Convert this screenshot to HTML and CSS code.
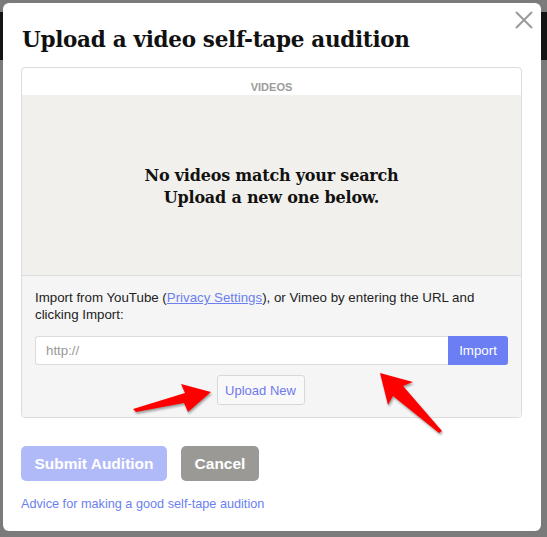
FILE: index.html
```html
<!DOCTYPE html>
<html lang="en">
<head>
    <meta charset="UTF-8">
    <meta name="viewport" content="width=device-width, initial-scale=1.0">
    <title>Upload Audition</title>
    <link rel="stylesheet" href="styles.css">
</head>
<body>
    <div class="backdrop">
        <div class="modal">
            <span class="close">
                <svg width="18" height="18" viewBox="0 0 18 18"><path d="M1 1 L17 17 M17 1 L1 17" stroke="#9a9a9a" stroke-width="2"/></svg>
            </span>
            <h1>Upload a video self-tape audition</h1>

            <div class="panel">
                <div class="panel-head">VIDEOS</div>
                <div class="empty">
                    <p>No videos match your search<br>Upload a new one below.</p>
                </div>
                <div class="import">
                    <p>Import from YouTube (<a href="#">Privacy Settings</a>), or Vimeo by entering the URL and clicking Import:</p>
                    <div class="url-row">
                        <input type="text" placeholder="http://">
                        <button class="import-btn">Import</button>
                    </div>
                    <div class="upload-row">
                        <button class="upload-btn">Upload New</button>
                    </div>
                </div>
            </div>

            <div class="actions">
                <button class="submit">Submit Audition</button>
                <button class="cancel">Cancel</button>
            </div>
            <a class="advice" href="#">Advice for making a good self-tape audition</a>

            <!-- annotation arrows drawn over the dialog -->
            <svg class="arrows" width="547" height="537" viewBox="0 0 547 537">
                <polygon points="133,409 185,393 181,384 211,392 188,412 184,403 136,412" fill="#ff0000"/>
                <polygon points="380,373 413,382 403,386 442,431 439,433 393,396 388,405" fill="#ff0000"/>
            </svg>
        </div>
    </div>
</body>
</html>
```

FILE: styles.css
```css
body{
    margin:0;
    padding:0;
    font-family: "Liberation Sans", Arial, sans-serif;
}
.backdrop{
    width:547px;
    height:537px;
    background: linear-gradient(#7b7b7b 0 12px, #141414 12px 60px, #7b7b7b 60px);
    padding-top:3px;
    box-sizing: border-box;
    overflow: hidden;
}
.modal{
    position: relative;
    width:538px;
    height:528px;
    margin-left:3px;
    background:white;
    border-radius:6px;
    padding:0 19px 0 18px;
    box-sizing: border-box;
}
.close{
    position: absolute;
    top:8px;
    right:8px;
    line-height:0;
}
h1{
    margin:0;
    padding:21px 0 0 1px;
    font-family: "DejaVu Serif", Georgia, serif;
    font-size:21.5px;
    line-height:32px;
    font-weight:bold;
    color:#111;
    letter-spacing:-0.3px;
}
.panel{
    margin-top:11px;
    border:1px solid #dcdcdc;
    border-radius:4px;
    overflow: hidden;
}
.panel-head{
    height:27px;
    padding-top:6px;
    box-sizing:border-box;
    line-height:27px;
    text-align:center;
    font-size:11px;
    font-weight:bold;
    color:#9b9b9b;
}
.empty{
    height:181px;
    padding-top:4px;
    box-sizing:border-box;
    background:#f1f0ec;
    border-bottom:1px solid #dcdcdc;
    display:flex;
    align-items:center;
    justify-content:center;
}
.empty p{
    margin:0;
    text-align:center;
    font-family: "DejaVu Serif", Georgia, serif;
    font-size:16px;
    font-weight:bold;
    line-height:22px;
    color:#111;
    letter-spacing:-0.2px;
}
.import{
    background:#f5f5f5;
    padding:13px 13px 12px 13px;
}
.import p{
    margin:0;
    font-size:13.3px;
    line-height:17px;
    color:#222;
}
.import a{
    color:#6b7ff0;
}
.url-row{
    display:flex;
    margin-top:13px;
}
.url-row input{
    flex:1;
    height:29px;
    box-sizing:border-box;
    border:1px solid #dcdcdc;
    border-right:none;
    border-radius:3px 0 0 3px;
    padding:0 10px;
    font-family: inherit;
    font-size:13.3px;
    outline:none;
}
.url-row input::placeholder{
    color:#999;
}
.import-btn{
    width:60px;
    height:29px;
    border:none;
    border-radius:0 3px 3px 0;
    background:#6c7ef3;
    color:white;
    font-family: inherit;
    font-size:13.3px;
    padding:0;
}
.upload-row{
    display:flex;
    justify-content:center;
    margin-top:10px;
    padding-right:22px;
}
.upload-btn{
    width:88px;
    height:30px;
    background:#f9f9f9;
    border:1px solid #d8d8d8;
    border-radius:3px;
    color:#6f78ef;
    font-family: inherit;
    font-size:13px;
    padding:0;
}
.actions{
    display:flex;
    gap:14px;
    margin-top:28px;
}
.actions button{
    height:35px;
    border:none;
    border-radius:5px;
    color:white;
    font-family: inherit;
    font-size:15.5px;
    font-weight:bold;
    padding:0;
}
.submit{
    width:146px;
    background:#b1baf8;
}
.cancel{
    width:78px;
    background:#9b9995;
}
.advice{
    display:block;
    margin-top:16px;
    font-size:12.7px;
    color:#6b7ff0;
    text-decoration:none;
}
.arrows{
    position:absolute;
    left:-3px;
    top:-3px;
    pointer-events:none;
    filter: drop-shadow(1px 2px 1px rgba(0,0,0,0.35));
}
```
